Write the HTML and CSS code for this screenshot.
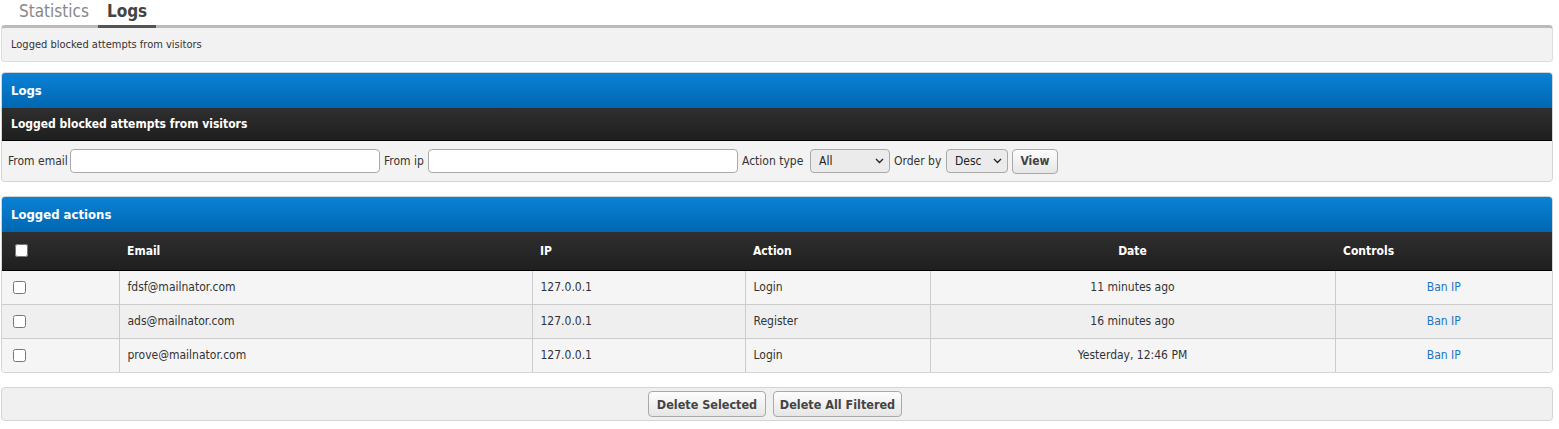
FILE: index.html
```html
<!DOCTYPE html>
<html lang="en">
<head>
  <meta charset="UTF-8">
  <meta name="viewport" content="width=device-width, initial-scale=1.0">
  <title>Logs</title>
  <link rel="stylesheet" href="styles.css">
</head>
<body>
  <div class="page">
    <div class="tabs">
      <a class="tab" href="#">Statistics</a>
      <a class="tab active" href="#">Logs</a>
    </div>
    <div class="intro">Logged blocked attempts from visitors</div>

    <div class="panel">
      <div class="panel-head">Logs</div>
      <div class="panel-sub">Logged blocked attempts from visitors</div>
      <form class="filters">
        <label class="lbl-email" for="fromEmail">From email</label>
        <input class="field" id="fromEmail" type="text">
        <label class="lbl-ip" for="fromIp">From ip</label>
        <input class="field" id="fromIp" type="text">
        <label class="lbl-action" for="actionType">Action type</label>
        <span class="select-wrap select-action">
          <select id="actionType">
            <option>All</option>
            <option>Login</option>
            <option>Register</option>
          </select>
          <svg class="chevron" width="9" height="6" viewBox="0 0 9 6"><path d="M1 1l3.5 3.5L8 1" fill="none" stroke="#222" stroke-width="1.3"/></svg>
        </span>
        <label class="lbl-order" for="orderBy">Order by</label>
        <span class="select-wrap select-order">
          <select id="orderBy">
            <option>Desc</option>
            <option>Asc</option>
          </select>
          <svg class="chevron" width="9" height="6" viewBox="0 0 9 6"><path d="M1 1l3.5 3.5L8 1" fill="none" stroke="#222" stroke-width="1.3"/></svg>
        </span>
        <button class="btn btn-view" type="button">View</button>
      </form>
    </div>

    <div class="panel">
      <div class="panel-head">Logged actions</div>
      <table class="log-table">
        <colgroup>
          <col style="width: 117px">
          <col style="width: 413px">
          <col style="width: 213px">
          <col style="width: 185px">
          <col style="width: 405px">
          <col>
        </colgroup>
        <thead>
          <tr>
            <th><input type="checkbox" class="check check-all"></th>
            <th>Email</th>
            <th>IP</th>
            <th>Action</th>
            <th class="center">Date</th>
            <th>Controls</th>
          </tr>
        </thead>
        <tbody>
          <tr>
            <td><input type="checkbox" class="check"></td>
            <td>fdsf@mailnator.com</td>
            <td>127.0.0.1</td>
            <td>Login</td>
            <td class="center">11 minutes ago</td>
            <td class="center"><a href="#">Ban IP</a></td>
          </tr>
          <tr>
            <td><input type="checkbox" class="check"></td>
            <td>ads@mailnator.com</td>
            <td>127.0.0.1</td>
            <td>Register</td>
            <td class="center">16 minutes ago</td>
            <td class="center"><a href="#">Ban IP</a></td>
          </tr>
          <tr>
            <td><input type="checkbox" class="check"></td>
            <td>prove@mailnator.com</td>
            <td>127.0.0.1</td>
            <td>Login</td>
            <td class="center">Yesterday, 12:46 PM</td>
            <td class="center"><a href="#">Ban IP</a></td>
          </tr>
        </tbody>
      </table>
    </div>

    <div class="actions">
      <button class="btn btn-selected" type="button">Delete Selected</button>
      <button class="btn btn-filtered" type="button">Delete All Filtered</button>
    </div>
  </div>
</body>
</html>
```

FILE: styles.css
```css
/* Reset */
* {
  box-sizing: border-box;
  margin: 0;
  padding: 0;
}
body {
  font-family: 'DejaVu Sans Condensed', 'DejaVu Sans', sans-serif;
  font-stretch: condensed;
  font-size: 12px;
  color: #333;
  background: #fff;
}
.page {
  padding: 0 6px 0 1px;
}
/* Tabs */
.tabs {
  display: flex;
  gap: 1px;
  padding-left: 9px;
  height: 25px;
  position: relative;
  z-index: 1;
}
.tab {
  display: block;
  padding: 0 8px 0 9px;
  font-size: 17px;
  line-height: 22px;
  color: #888;
  text-decoration: none;
  border-bottom: 3px solid transparent;
  height: 28px;
}
.tab.active {
  font-weight: bold;
  color: #444;
  border-bottom-color: #555;
  padding: 0 9px 0 9px;
}
.intro {
  background: #f2f2f2;
  border: 1px solid #ddd;
  border-top: 3px solid #bbb;
  border-radius: 4px;
  height: 37px;
  line-height: 33px;
  padding: 0 9px;
  font-size: 11px;
  margin-bottom: 10px;
}
/* Panels */
.panel {
  border: 1px solid #d4d4d4;
  border-radius: 4px;
  overflow: hidden;
  margin-bottom: 14px;
  background: #f3f3f3;
}
.panel-head {
  height: 35px;
  line-height: 35px;
  padding: 0 9px;
  color: #fff;
  font-weight: bold;
  font-size: 13px;
  background: linear-gradient(#0a82d6, #0067b1);
}
.panel-sub {
  height: 33px;
  line-height: 32px;
  padding: 0 9px;
  color: #fff;
  font-weight: bold;
  font-size: 12px;
  background: linear-gradient(#2f2f2f, #1f1f1f);
  border-bottom: 1px solid #000;
}
/* Filters */
.filters {
  display: flex;
  align-items: center;
  gap: 4px;
  height: 40px;
  padding: 0 6px;
}
.lbl-email { width: 58px; }
.lbl-ip { width: 40px; }
.lbl-action { width: 64px; }
.lbl-order { width: 48px; }
.filters label {
  white-space: nowrap;
}
.field {
  width: 310px;
  height: 24px;
  border: 1px solid #a9a9a9;
  border-radius: 4px;
  background: #fff;
  font: inherit;
  padding: 0 4px;
}
.select-wrap {
  position: relative;
  display: block;
}
.select-wrap select {
  appearance: none;
  -webkit-appearance: none;
  height: 24px;
  border: 1px solid #a9a9a9;
  border-radius: 4px;
  background: #ebebeb;
  font: inherit;
  color: #222;
  padding: 0 8px;
  display: block;
}
.select-action select {
  width: 80px;
}
.select-order select {
  width: 62px;
}
.chevron {
  position: absolute;
  right: 6px;
  top: 9px;
  pointer-events: none;
}
.btn {
  height: 25px;
  padding: 0;
  border: 1px solid #a9a9a9;
  border-radius: 4px;
  background: linear-gradient(#fdfdfd, #e6e6e6);
  font: inherit;
  font-weight: bold;
  color: #444;
  cursor: pointer;
}
.btn-view {
  width: 46px;
}
.btn-selected,
.btn-filtered {
  height: 26px;
  font-size: 12.5px;
}
.btn-selected { width: 118px; }
.btn-filtered { width: 129px; }
/* Table */
.log-table {
  width: 100%;
  border-collapse: collapse;
  table-layout: fixed;
}
.log-table th {
  height: 38px;
  color: #fff;
  font-weight: bold;
  text-align: left;
  padding: 0 8px;
  background: linear-gradient(#2f2f2f, #1f1f1f);
  border-bottom: 1px solid #000;
}
.log-table td {
  height: 34px;
  padding: 0 8px;
  border: 1px solid #ccc;
  border-top: none;
  background: #f5f5f5;
}
.log-table tbody tr:nth-child(even) td {
  background: #efefef;
}
.log-table td:first-child {
  border-left: none;
}
.log-table td:last-child {
  border-right: none;
}
.log-table tbody tr:last-child td {
  border-bottom: none;
}
.log-table th:first-child,
.log-table td:first-child {
  padding-left: 10px;
}
.log-table .center {
  text-align: center;
}
.log-table a {
  color: #1c74c4;
  text-decoration: none;
}
.check {
  width: 13px;
  height: 13px;
  display: block;
  margin-left: 1px;
}
.check-all {
  margin-left: 3px;
}
/* Bottom actions */
.actions {
  display: flex;
  justify-content: center;
  align-items: center;
  gap: 7px;
  height: 34px;
  padding-right: 4px;
  border: 1px solid #d4d4d4;
  border-radius: 4px;
  background: #f0f0f0;
}
```
